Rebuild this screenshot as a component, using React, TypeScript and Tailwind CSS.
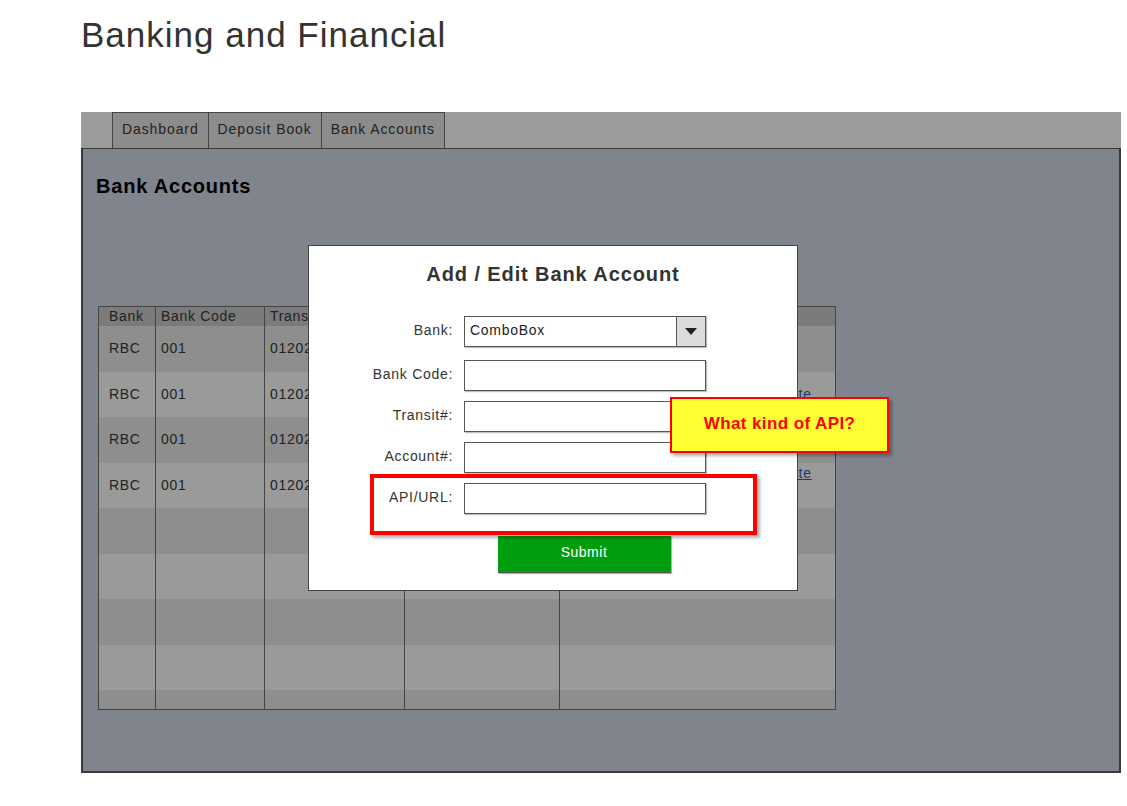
const font = { fontFamily: '"Liberation Sans", Arial, sans-serif' };

const rows = [
  { bank: "RBC", code: "001", transit: "012023", link: "" },
  { bank: "RBC", code: "001", transit: "012023", link: "mid" },
  { bank: "RBC", code: "001", transit: "012023", link: "" },
  { bank: "RBC", code: "001", transit: "012023", link: "top" },
  { bank: "", code: "", transit: "", link: "" },
  { bank: "", code: "", transit: "", link: "" },
  { bank: "", code: "", transit: "", link: "" },
  { bank: "", code: "", transit: "", link: "" },
  { bank: "", code: "", transit: "", link: "" },
];

function Field({ label, combo }: { label: string; combo?: boolean }) {
  return (
    <div className="flex items-center">
      <div className="w-[145px] pr-[1px] text-right text-[14px] tracking-[0.7px] text-[#333] -mt-[3px]">{label}</div>
      <div className="ml-[10px] flex h-[31px] w-[242px] border border-[#555] bg-white shadow-[1px_1px_1px_rgba(0,0,0,0.25)]">
        {combo ? (
          <>
            <div className="flex-1 pl-[5px] pt-[3px] text-[14px] tracking-[0.7px] text-[#222]">ComboBox</div>
            <div className="flex w-[29px] items-center justify-center border-l border-[#555] bg-[#dcdcdc]">
              <svg width="12" height="7" viewBox="0 0 12 7">
                <path d="M0 0 L12 0 L6 7 Z" fill="#222" />
              </svg>
            </div>
          </>
        ) : null}
      </div>
    </div>
  );
}

export default function App() {
  return (
    <div className="min-h-[806px] bg-white pl-[81px] pr-[6px]" style={font}>
      <h1 className="pt-[17px] text-[35px] leading-[35px] tracking-[1px] text-[#333]">Banking and Financial</h1>

      <div className="mt-[60px] flex h-[36px] bg-[#9b9b9b] pl-[31px]">
        {["Dashboard", "Deposit Book", "Bank Accounts"].map((t, i) => (
          <div
            key={t}
            className={`flex items-center border-t border-r border-[#444] bg-[#8c8c8c] px-[9px] pb-[3px] text-[14px] tracking-[0.9px] text-[#222] ${i === 0 ? "border-l" : ""}`}
          >
            {t}
          </div>
        ))}
      </div>

      <div className="relative h-[625px] border-x-2 border-b-2 border-t border-[#3a3a3a] bg-[#80848d] pl-[13px]">
        <h2 className="pt-[25px] text-[20px] font-bold leading-[24px] tracking-[0.8px] text-black">Bank Accounts</h2>

        <div className="mt-[108px] ml-[2px] h-[404px] w-[738px] overflow-hidden border border-[#444] text-[14px] tracking-[0.7px] text-[#222]">
          <div className="flex h-[19px] bg-[#7b7b7b]">
            <div className="w-[57px] border-r border-[#444] pl-[10px] leading-[19px]">Bank</div>
            <div className="w-[109px] border-r border-[#444] pl-[5px] leading-[19px]">Bank Code</div>
            <div className="w-[140px] border-r border-[#444] pl-[5px] leading-[19px]">Transit</div>
            <div className="w-[155px] border-r border-[#444]" />
            <div className="flex-1" />
          </div>
          {rows.map((r, i) => (
            <div key={i} className={`flex h-[45.5px] ${i % 2 === 0 ? "bg-[#8e8e8e]" : "bg-[#9a9a9a]"}`}>
              <div className="flex w-[57px] items-center border-r border-[#444] pl-[10px]">{r.bank}</div>
              <div className="flex w-[109px] items-center border-r border-[#444] pl-[5px]">{r.code}</div>
              <div className="flex w-[140px] items-center border-r border-[#444] pl-[5px]">{r.transit}</div>
              <div className="w-[155px] border-r border-[#444]" />
              <div className="relative flex-1">
                {r.link === "mid" ? (
                  <span className="absolute left-[207px] top-[12px] text-[#1f3a66] underline">Delete</span>
                ) : null}
                {r.link === "top" ? (
                  <span className="absolute left-[207px] top-[0px] text-[#1f3a66] underline">Delete</span>
                ) : null}
              </div>
            </div>
          ))}
        </div>

        <div className="absolute left-[225px] top-[96px] flex h-[346px] w-[490px] flex-col items-center border border-[#444] bg-white">
          <div className="mt-[16px] text-[20px] font-bold leading-[24px] tracking-[0.9px] text-[#333]">Add / Edit Bank Account</div>
          <div className="mt-[30px] flex w-full flex-col">
            <Field label="Bank:" combo />
            <div className="mt-[13px]"><Field label="Bank Code:" /></div>
            <div className="mt-[10px]"><Field label="Transit#:" /></div>
            <div className="mt-[10px]"><Field label="Account#:" /></div>
            <div className="mt-[10px]"><Field label="API/URL:" /></div>
          </div>
          <button className="mt-[22px] ml-[62px] h-[37px] w-[173px] border-b border-[#555] bg-[#009e0f] pb-[4px] text-[14px] tracking-[0.5px] text-white shadow-[1px_1px_1px_rgba(0,0,0,0.3)]">
            Submit
          </button>
          <div className="absolute left-[61px] top-[228px] h-[61px] w-[387px] border-4 border-[#ff0000] shadow-[3px_3px_3px_rgba(0,0,0,0.3)]" />
        </div>

        <div className="absolute left-[587px] top-[248px] flex h-[56px] w-[219px] items-center justify-center border-2 border-[#ff0000] bg-[#ffff33] pb-[2px] text-[17px] font-bold tracking-[0.4px] text-[#ff0000] shadow-[3px_3px_3px_rgba(0,0,0,0.3)]">
          What kind of API?
        </div>
      </div>
    </div>
  );
}
